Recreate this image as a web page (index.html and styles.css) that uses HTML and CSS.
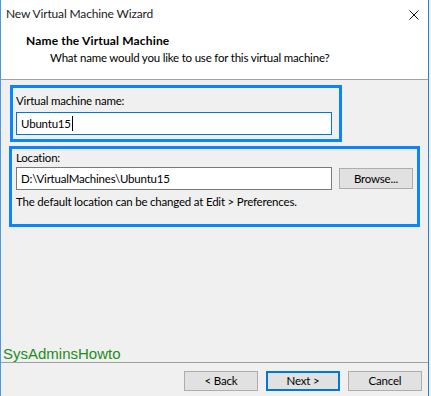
FILE: index.html
```html
<!DOCTYPE html>
<html>
<head>
<meta charset="utf-8">
<link rel="stylesheet" href="styles.css">
</head>
<body>
<div class="window">
  <div class="top">
    <div class="titlebar">
      <span class="title">New Virtual Machine Wizard</span>
      <svg class="close" width="10" height="10" viewBox="0 0 10 10"><path d="M0.5 0.5 L9.5 9.5 M9.5 0.5 L0.5 9.5" stroke="#111" stroke-width="1" fill="none"/></svg>
    </div>
    <div class="heading">Name the Virtual Machine</div>
    <div class="subheading">What name would you like to use for this virtual machine?</div>
  </div>
  <div class="content">
    <div class="box box-name">
      <div class="label">Virtual machine name:</div>
      <div class="input focused">Ubuntu15<span class="caret"></span></div>
    </div>
    <div class="box box-loc">
      <div class="label">Location:</div>
      <div class="row">
        <div class="input">D:\VirtualMachines\Ubuntu15</div>
        <div class="btn browse">Browse...</div>
      </div>
      <div class="help">The default location can be changed at Edit &gt; Preferences.</div>
    </div>
    <div class="spacer"></div>
    <div class="watermark">SysAdminsHowto</div>
  </div>
  <div class="footer">
    <div class="btn">&lt; Back</div>
    <div class="btn default">Next &gt;</div>
    <div class="btn">Cancel</div>
  </div>
</div>
</body>
</html>
```
FILE: styles.css
```css
html, body {
  margin: 0;
  padding: 0;
  background: #f0f0f0;
}
body {
  font-family: Lato, "Liberation Sans", sans-serif;
  font-size: 11.5px;
  letter-spacing: -0.2px;
  color: #000;
  width: 431px;
  height: 396px;
  overflow: hidden;
  position: relative;
}
.window {
  width: 427px;
  height: 396px;
  border-left: 1px solid #4a9ae0;
  border-right: 1px solid #1e86dc;
  display: flex;
  flex-direction: column;
  background: #f0f0f0;
}
.top {
  background: #fff;
  height: 79px;
  border-bottom: 1px solid #a0a0a0;
  box-sizing: content-box;
}
.titlebar {
  height: 30px;
  display: flex;
  align-items: flex-start;
  justify-content: space-between;
}
.title {
  font-size: 12px;
  letter-spacing: -0.15px;
  padding-left: 5px;
  padding-top: 6px;
  line-height: 16px;
  color: #1a1a1a;
}
.close {
  margin-top: 10px;
  margin-right: 9px;
}
.heading {
  font-weight: bold;
  font-size: 12px;
  letter-spacing: 0.15px;
  padding-left: 25px;
  line-height: 16px;
  margin-top: 3px;
}
.subheading {
  padding-left: 49px;
  line-height: 16px;
  margin-top: 1px;
}
.content {
  flex: 1;
  display: flex;
  flex-direction: column;
  border-bottom: 1px solid #a0a0a0;
}
.box {
  border: 3px solid #0a84ff;
  box-sizing: border-box;
}
.box-name {
  margin-top: 5px;
  margin-left: 9px;
  width: 332px;
  height: 57px;
  padding: 5px 0 0 3px;
}
.box-loc {
  margin-top: 4px;
  margin-left: 8px;
  width: 411px;
  height: 81px;
  padding: 1px 0 0 4px;
}
.label {
  line-height: 16px;
  margin-bottom: 3px;
}
.box-loc .label {
  margin-bottom: 1px;
}
.input {
  width: 316px;
  height: 23px;
  box-sizing: border-box;
  border: 1px solid #7a7a7a;
  background: #fff;
  line-height: 21px;
  padding-left: 4px;
  display: flex;
  align-items: center;
}
.input.focused {
  border-color: #0078d7;
}
.caret {
  display: inline-block;
  width: 1px;
  height: 15px;
  background: #000;
  margin-left: 1px;
}
.row {
  display: flex;
  align-items: flex-start;
  gap: 7px;
}
.btn {
  width: 74px;
  height: 20px;
  box-sizing: border-box;
  border: 1px solid #adadad;
  background: #e1e1e1;
  display: flex;
  align-items: center;
  justify-content: center;
  line-height: 16px;
}
.browse {
  height: 21px;
  margin-top: 1px;
}
.help {
  line-height: 16px;
  margin-top: 4px;
}
.spacer {
  flex: 1;
}
.watermark {
  font-family: "Liberation Sans", Arial, sans-serif;
  font-size: 15px;
  letter-spacing: 0;
  color: #1f8c1f;
  line-height: 17px;
  padding-left: 2px;
  margin-bottom: 0;
}
.footer {
  height: 33px;
  display: flex;
  justify-content: flex-end;
  align-items: flex-start;
  gap: 8px;
  padding-top: 8px;
  padding-right: 6px;
  box-sizing: border-box;
}
.btn.default {
  border: 2px solid #0078d7;
}
```
